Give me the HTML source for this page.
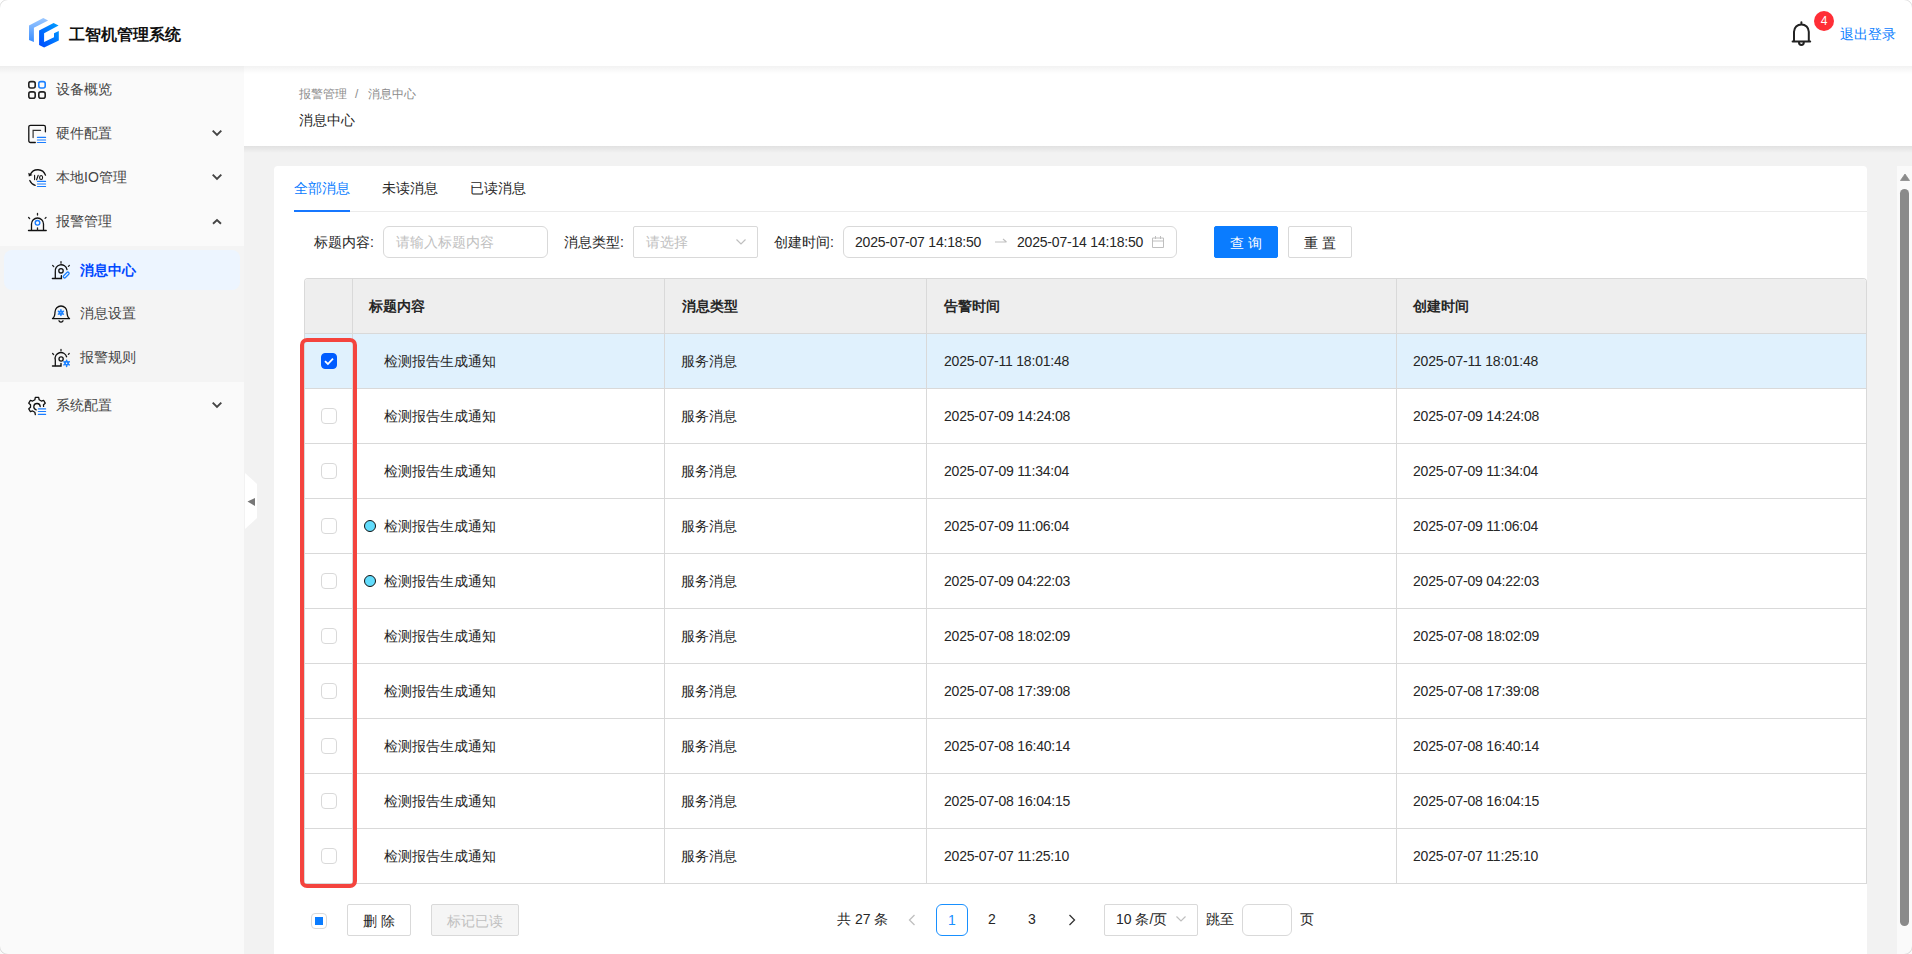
<!DOCTYPE html>
<html><head><meta charset="utf-8">
<style>
*{box-sizing:border-box;margin:0;padding:0}
html,body{width:1912px;height:954px;overflow:hidden;background:#f2f2f2;font-family:"Liberation Sans",sans-serif;font-size:14px;color:#262626}
.a{position:absolute}
.t{position:absolute;white-space:nowrap;line-height:20px}
#hdr{left:0;top:0;width:1912px;height:66px;background:#fff;z-index:5}
#side{left:0;top:66px;width:244px;height:888px;background:#fafafa}
#sub{left:0;top:246px;width:244px;height:136px;background:#f4f4f4}
#selbg{left:4px;top:250px;width:236px;height:40px;background:#edf5ff;border-radius:8px}
.mi{position:absolute;left:56px;white-space:nowrap;line-height:20px;color:#444}
.chev{position:absolute;left:211px;width:12px;height:8px}
#ph{left:244px;top:66px;width:1668px;height:80px;background:#fff}
#card{left:274px;top:166px;width:1593px;height:800px;background:#fff;border-radius:4px}
.inp{position:absolute;border:1px solid #d9d9d9;background:#fff}
.ph{color:#bfbfbf}
.btn{position:absolute;height:32px;border:1px solid #d9d9d9;background:#fff;border-radius:2px;text-align:center;line-height:32px}
#tbl{left:304px;top:278px;width:1563px;height:606px;border:1px solid #d9d9d9;border-radius:4px 4px 0 0;overflow:hidden;border-bottom:none}
.hrow{position:absolute;left:0;top:0;width:100%;height:55px;background:#eeeeee;border-bottom:1px solid #d9d9d9}
.row{position:absolute;left:0;width:100%;height:55px;border-bottom:1px solid #d9d9d9}
.vl{position:absolute;top:0;width:1px;height:606px;background:#d9d9d9}
.cb{position:absolute;left:16px;width:16px;height:16px;border:1px solid #d9d9d9;border-radius:4px;background:#fff}
.ct{position:absolute;white-space:nowrap;line-height:20px;color:#262626}
.ht{position:absolute;white-space:nowrap;line-height:20px;color:#262626;font-weight:bold}
.dt{letter-spacing:-0.2px}
.dot{position:absolute;left:59px;width:12px;height:12px;border-radius:50%;background:#62dcfc;border:1px solid #111}
</style></head><body>

<!-- header -->
<div id="hdr" class="a">
  <svg class="a" style="left:0;top:0" width="70" height="66" viewBox="0 0 70 66">
    <defs>
      <linearGradient id="g1" x1="0" y1="0" x2="0" y2="1"><stop offset="0" stop-color="#9cc8ff"/><stop offset="1" stop-color="#3a8dff"/></linearGradient>
      <linearGradient id="g2" x1="1" y1="0" x2="0" y2="1"><stop offset="0" stop-color="#00a0ff"/><stop offset="1" stop-color="#0048ff"/></linearGradient>
    </defs>
    <polygon fill="url(#g1)" points="29,25.4 43.3,18.1 48.1,20.4 33.9,27.7 33.9,42 29,39.9"/>
    <polygon fill="url(#g2)" points="39.1,30.4 53.6,23 58.6,25.4 44.1,33.2 44.1,42 54,37.2 54,33.2 58.8,31.1 58.8,40.5 44.1,47.6 39.1,45.1"/>
  </svg>
  <div class="t" style="left:69px;top:24px;font-size:16px;font-weight:bold;color:#111;line-height:22px">工智机管理系统</div>
  <svg class="a" style="left:1788px;top:18px" width="26" height="30" viewBox="0 0 26 30">
    <path d="M13.4 4.2 L13.4 5.8 M6 23.2 L6 13.8 A7.4 7.4 0 0 1 20.8 13.8 L20.8 23.2 M4.6 23.4 L22.2 23.4 M11 24.6 A2.4 2.4 0 0 0 15.8 24.6" fill="none" stroke="#222" stroke-width="2" stroke-linecap="round"/>
  </svg>
  <div class="a" style="left:1814px;top:11px;width:20px;height:20px;border-radius:50%;background:#ff2e36;color:#fff;font-size:12px;line-height:20px;text-align:center">4</div>
  <div class="t" style="left:1840px;top:24px;color:#0b80ff">退出登录</div>
</div>

<!-- sidebar -->
<div id="side" class="a"></div>
<div class="a" style="left:0;top:66px;width:1912px;height:8px;z-index:4;background:linear-gradient(rgba(0,0,0,0.05),rgba(0,0,0,0))"></div>
<div id="sub" class="a"></div>
<div id="selbg" class="a"></div>

<div class="mi" style="top:79px">设备概览</div>
<div class="mi" style="top:123px">硬件配置</div>
<div class="mi" style="top:167px">本地IO管理</div>
<div class="mi" style="top:211px">报警管理</div>
<div class="mi" style="left:80px;top:260px;color:#0048ff;font-weight:bold">消息中心</div>
<div class="mi" style="left:80px;top:303px">消息设置</div>
<div class="mi" style="left:80px;top:347px">报警规则</div>
<div class="mi" style="top:395px">系统配置</div>


<!-- sidebar icons -->
<svg class="a" style="left:24px;top:76px" width="28" height="28" viewBox="0 0 28 28" fill="none" stroke-width="1.4">
  <rect x="4.8" y="5.6" width="6.4" height="6.4" rx="2" stroke="#222" stroke-width="1.6"/>
  <rect x="14.8" y="5.6" width="6.4" height="6.4" rx="2" stroke="#1a80ff" stroke-width="1.6"/>
  <rect x="4.8" y="15.9" width="6.4" height="6.4" rx="2" stroke="#222" stroke-width="1.6"/>
  <rect x="14.8" y="15.9" width="6.4" height="6.4" rx="2" stroke="#222" stroke-width="1.6"/>
</svg>
<svg class="a" style="left:24px;top:120px" width="28" height="28" viewBox="0 0 28 28" fill="none" stroke-linecap="round">
  <path d="M21.4 11.8 V7 A1.7 1.7 0 0 0 19.7 5.3 H6.5 A1.7 1.7 0 0 0 4.8 7 V20.8 A1.7 1.7 0 0 0 6.5 22.5 H11.3" stroke="#111" stroke-width="1.3"/>
  <path d="M9.1 17.6 V10.3 H16.6" stroke="#333" stroke-width="1.2"/>
  <path d="M13.4 17.4 H21.6 M13.4 20 H21.6 M13.4 22.5 H21.6" stroke="#1a7dff" stroke-width="1.1"/>
</svg>
<svg class="a" style="left:24px;top:164px" width="28" height="28" viewBox="0 0 28 28" fill="none" stroke-linecap="round">
  <path d="M6.3 10.6 A8.2 8.2 0 0 1 21.5 11.2" stroke="#111" stroke-width="1.3"/>
  <path d="M5.8 16.5 A8.2 8.2 0 0 0 11.2 21.4" stroke="#111" stroke-width="1.3"/>
  <polygon points="4.3,8.8 8.5,11 4.8,12.6" fill="#111"/>
  <path d="M10.6 11.4 V15.6 M14.2 11.3 L12.6 15.7" stroke="#111" stroke-width="1.1"/><ellipse cx="17.1" cy="13.5" rx="1.5" ry="2.05" stroke="#111" stroke-width="1.1"/>
  <path d="M13.4 17.4 H21.6 M13.4 20 H21.6 M13.4 22.5 H21.6" stroke="#1a7dff" stroke-width="1.1"/>
</svg>
<svg class="a" style="left:24px;top:208px" width="28" height="28" viewBox="0 0 28 28" fill="none" stroke-linecap="round">
  <path d="M7.5 22 V16 A6 6 0 0 1 19.5 16 V22" stroke="#111" stroke-width="1.3"/>
  <path d="M4.5 22.5 H22.2" stroke="#111" stroke-width="1.4"/>
  <path d="M13.5 5.5 V7 M4.6 9.5 L5.6 10.5 M22 9.5 L21.1 10.4 M13.5 19.8 V22" stroke="#222" stroke-width="1.3"/>
  <circle cx="13.5" cy="14.8" r="2.3" stroke="#1a7dff" stroke-width="1.4"/>
</svg>
<svg class="a" style="left:48px;top:255px" width="28" height="28" viewBox="0 0 28 28" fill="none" stroke-linecap="round">
  <path d="M7.3 23 V16.8 A5.8 5.8 0 0 1 19 14.6" stroke="#111" stroke-width="1.3"/>
  <path d="M4.4 23.5 H13.4 V20.8" stroke="#111" stroke-width="1.4"/>
  <path d="M13 6.6 V8.2 M4.6 10.4 L5.7 11.5 M21.4 10.4 L20.4 11.4" stroke="#222" stroke-width="1.3"/>
  <circle cx="13" cy="15.8" r="2.2" stroke="#111" stroke-width="1.3"/>
  <g transform="translate(18.2 20) rotate(-45)"><rect x="-3.6" y="-1.3" width="7.2" height="2.6" rx="1.3" stroke="#1a80ff" stroke-width="1.2"/></g>
</svg>
<svg class="a" style="left:48px;top:299px" width="28" height="28" viewBox="0 0 28 28" fill="none" stroke-linecap="round">
  <path d="M4.5 19.6 Q7 18 7 13 A6 6 0 0 1 19 13 Q19 18 21.5 19.6 Z" stroke="#111" stroke-width="1.3" stroke-linejoin="round"/>
  <path d="M11 21.8 Q13 24.5 15 21.8" stroke="#111" stroke-width="1.3"/>
  <circle cx="12.9" cy="13.7" r="1.5" stroke="#1a80ff" stroke-width="1.5"/><path d="M12.90 12.40 L12.90 10.80 M14.03 13.05 L15.41 12.25 M14.03 14.35 L15.41 15.15 M12.90 15.00 L12.90 16.60 M11.77 14.35 L10.39 15.15 M11.77 13.05 L10.39 12.25" stroke="#1a80ff" stroke-width="1.5"/>
</svg>
<svg class="a" style="left:48px;top:343px" width="28" height="28" viewBox="0 0 28 28" fill="none" stroke-linecap="round">
  <path d="M7.3 22.5 V17 A5.7 5.7 0 0 1 18.6 13.8" stroke="#111" stroke-width="1.3"/>
  <path d="M4.5 23 H13 V20.5" stroke="#111" stroke-width="1.4"/>
  <path d="M13 6.3 V7.8 M4.6 10.5 L5.6 11.5 M21.2 10.5 L20.4 11.4" stroke="#222" stroke-width="1.3"/>
  <circle cx="13.1" cy="16" r="2.1" stroke="#111" stroke-width="1.3"/>
  <circle cx="18.6" cy="20.3" r="1.7" stroke="#1a80ff" stroke-width="1.5"/><path d="M18.60 18.80 L18.60 17.20 M19.90 19.55 L21.28 18.75 M19.90 21.05 L21.28 21.85 M18.60 21.80 L18.60 23.40 M17.30 21.05 L15.92 21.85 M17.30 19.55 L15.92 18.75" stroke="#1a80ff" stroke-width="1.5"/>
</svg>
<svg class="a" style="left:24px;top:392px" width="28" height="28" viewBox="0 0 28 28" fill="none" stroke-linecap="round" stroke-linejoin="round">
  <path d="M19.58 14.46 L19.48 12.74 L21.23 11.17 L19.57 8.29 L17.33 9.02 L15.15 7.76 L14.66 5.46 L11.34 5.46 L10.85 7.76 L8.67 9.02 L6.43 8.29 L4.77 11.17 L6.52 12.74 L6.52 15.26 L4.77 16.83 L6.43 19.71 L8.67 18.98 L10.85 20.24 L11.34 22.54" stroke="#111" stroke-width="1.3"/>
  <path d="M16.2 14.6 A3.2 3.2 0 1 0 12.2 17.8" stroke="#111" stroke-width="1.3"/>
  <path d="M14.4 16.9 H21.6 M14.4 19.5 H21.6 M14.4 22.4 H21.6" stroke="#1a7dff" stroke-width="1.2"/>
</svg>
<!-- chevrons -->
<svg class="chev" style="top:129px" viewBox="0 0 12 8"><path d="M1.7 1.6 L6 6 L10.3 1.6" fill="none" stroke="#444" stroke-width="1.9"/></svg>
<svg class="chev" style="top:173px" viewBox="0 0 12 8"><path d="M1.7 1.6 L6 6 L10.3 1.6" fill="none" stroke="#444" stroke-width="1.9"/></svg>
<svg class="chev" style="top:218px" viewBox="0 0 12 8"><path d="M2 5.8 L6 2 L10 5.8" fill="none" stroke="#444" stroke-width="1.9"/></svg>
<svg class="chev" style="top:401px" viewBox="0 0 12 8"><path d="M1.7 1.6 L6 6 L10.3 1.6" fill="none" stroke="#444" stroke-width="1.9"/></svg>

<!-- page header -->
<div id="ph" class="a"></div>
<div class="a" style="left:244px;top:146px;width:1668px;height:7px;background:linear-gradient(rgba(0,0,0,0.07),rgba(0,0,0,0))"></div>
<div class="t" style="left:299px;top:84px;font-size:12px;color:#8c8c8c">报警管理<span style="margin:0 10px 0 8px">/</span>消息中心</div>
<div class="t" style="left:299px;top:110px;color:#1f1f1f">消息中心</div>

<!-- collapse handle -->
<svg class="a" style="left:244px;top:470px" width="14" height="62" viewBox="0 0 14 62">
  <polygon points="1,3 13,14 13,48 1,59" fill="#fff"/>
  <polygon points="3.5,31.5 11,28 11,36" fill="#777"/>
</svg>

<!-- card -->
<div id="card" class="a"></div>


<!-- tabs -->
<div class="t" style="left:294px;top:178px;color:#0a7cff">全部消息</div>
<div class="t" style="left:382px;top:178px;color:#262626">未读消息</div>
<div class="t" style="left:470px;top:178px;color:#262626">已读消息</div>
<div class="a" style="left:294px;top:211px;width:1573px;height:1px;background:#ebebeb"></div>
<div class="a" style="left:294px;top:210px;width:56px;height:2px;background:#1677ff"></div>

<!-- filters -->
<div class="t" style="left:314px;top:232px">标题内容:</div>
<div class="inp" style="left:383px;top:226px;width:165px;height:32px;border-radius:6px"></div>
<div class="t ph" style="left:396px;top:232px">请输入标题内容</div>
<div class="t" style="left:564px;top:232px">消息类型:</div>
<div class="inp" style="left:633px;top:226px;width:125px;height:32px;border-radius:2px"></div>
<div class="t ph" style="left:646px;top:232px">请选择</div>
<svg class="a" style="left:735px;top:237px" width="12" height="10" viewBox="0 0 12 10"><path d="M1.5 2.5 L6 7 L10.5 2.5" fill="none" stroke="#bfbfbf" stroke-width="1.2"/></svg>
<div class="t" style="left:774px;top:232px">创建时间:</div>
<div class="inp" style="left:843px;top:226px;width:334px;height:32px;border-radius:6px"></div>
<div class="t dt" style="left:855px;top:232px">2025-07-07 14:18:50</div>
<svg class="a" style="left:994px;top:236px" width="14" height="10" viewBox="0 0 14 10"><path d="M1 6 H12.5 M9 3 L12.5 6" fill="none" stroke="#bfbfbf" stroke-width="1.1"/></svg>
<div class="t dt" style="left:1017px;top:232px">2025-07-14 14:18:50</div>
<svg class="a" style="left:1151px;top:235px" width="14" height="14" viewBox="0 0 14 14"><path d="M1.5 3 H12.5 V12.5 H1.5 Z M1.5 6 H12.5 M4.5 1 V4 M9.5 1 V4" fill="none" stroke="#bfbfbf" stroke-width="1"/></svg>
<div class="btn" style="left:1214px;top:226px;width:64px;background:#0a7cff;border-color:#0a7cff;color:#fff;letter-spacing:4px;text-indent:4px">查询</div>
<div class="btn" style="left:1288px;top:226px;width:64px;letter-spacing:4px;text-indent:4px">重置</div>

<!-- table -->
<div id="tbl" class="a">
  <div class="hrow">
    <div class="ht" style="left:64px;top:17px">标题内容</div>
    <div class="ht" style="left:377px;top:17px">消息类型</div>
    <div class="ht" style="left:639px;top:17px">告警时间</div>
    <div class="ht" style="left:1108px;top:17px">创建时间</div>
  </div>
<div class="row" style="top:55px;background:#e0f1fd;"><div class="cb" style="top:19px;background:#005cff;border-color:#005cff"><svg width="14" height="14" viewBox="0 0 14 14" style="position:absolute;left:0;top:0"><path d="M3 7.2 L5.9 10 L11 4.6" fill="none" stroke="#fff" stroke-width="1.8"/></svg></div>
<div class="ct" style="left:79px;top:17px">检测报告生成通知</div>
<div class="ct" style="left:376px;top:17px">服务消息</div>
<div class="ct dt" style="left:639px;top:17px">2025-07-11 18:01:48</div>
<div class="ct dt" style="left:1108px;top:17px">2025-07-11 18:01:48</div>
</div>
<div class="row" style="top:110px;"><div class="cb" style="top:19px"></div>
<div class="ct" style="left:79px;top:17px">检测报告生成通知</div>
<div class="ct" style="left:376px;top:17px">服务消息</div>
<div class="ct dt" style="left:639px;top:17px">2025-07-09 14:24:08</div>
<div class="ct dt" style="left:1108px;top:17px">2025-07-09 14:24:08</div>
</div>
<div class="row" style="top:165px;"><div class="cb" style="top:19px"></div>
<div class="ct" style="left:79px;top:17px">检测报告生成通知</div>
<div class="ct" style="left:376px;top:17px">服务消息</div>
<div class="ct dt" style="left:639px;top:17px">2025-07-09 11:34:04</div>
<div class="ct dt" style="left:1108px;top:17px">2025-07-09 11:34:04</div>
</div>
<div class="row" style="top:220px;"><div class="cb" style="top:19px"></div><div class="dot" style="top:21px"></div>
<div class="ct" style="left:79px;top:17px">检测报告生成通知</div>
<div class="ct" style="left:376px;top:17px">服务消息</div>
<div class="ct dt" style="left:639px;top:17px">2025-07-09 11:06:04</div>
<div class="ct dt" style="left:1108px;top:17px">2025-07-09 11:06:04</div>
</div>
<div class="row" style="top:275px;"><div class="cb" style="top:19px"></div><div class="dot" style="top:21px"></div>
<div class="ct" style="left:79px;top:17px">检测报告生成通知</div>
<div class="ct" style="left:376px;top:17px">服务消息</div>
<div class="ct dt" style="left:639px;top:17px">2025-07-09 04:22:03</div>
<div class="ct dt" style="left:1108px;top:17px">2025-07-09 04:22:03</div>
</div>
<div class="row" style="top:330px;"><div class="cb" style="top:19px"></div>
<div class="ct" style="left:79px;top:17px">检测报告生成通知</div>
<div class="ct" style="left:376px;top:17px">服务消息</div>
<div class="ct dt" style="left:639px;top:17px">2025-07-08 18:02:09</div>
<div class="ct dt" style="left:1108px;top:17px">2025-07-08 18:02:09</div>
</div>
<div class="row" style="top:385px;"><div class="cb" style="top:19px"></div>
<div class="ct" style="left:79px;top:17px">检测报告生成通知</div>
<div class="ct" style="left:376px;top:17px">服务消息</div>
<div class="ct dt" style="left:639px;top:17px">2025-07-08 17:39:08</div>
<div class="ct dt" style="left:1108px;top:17px">2025-07-08 17:39:08</div>
</div>
<div class="row" style="top:440px;"><div class="cb" style="top:19px"></div>
<div class="ct" style="left:79px;top:17px">检测报告生成通知</div>
<div class="ct" style="left:376px;top:17px">服务消息</div>
<div class="ct dt" style="left:639px;top:17px">2025-07-08 16:40:14</div>
<div class="ct dt" style="left:1108px;top:17px">2025-07-08 16:40:14</div>
</div>
<div class="row" style="top:495px;"><div class="cb" style="top:19px"></div>
<div class="ct" style="left:79px;top:17px">检测报告生成通知</div>
<div class="ct" style="left:376px;top:17px">服务消息</div>
<div class="ct dt" style="left:639px;top:17px">2025-07-08 16:04:15</div>
<div class="ct dt" style="left:1108px;top:17px">2025-07-08 16:04:15</div>
</div>
<div class="row" style="top:550px;"><div class="cb" style="top:19px"></div>
<div class="ct" style="left:79px;top:17px">检测报告生成通知</div>
<div class="ct" style="left:376px;top:17px">服务消息</div>
<div class="ct dt" style="left:639px;top:17px">2025-07-07 11:25:10</div>
<div class="ct dt" style="left:1108px;top:17px">2025-07-07 11:25:10</div>
</div>
  <div class="vl" style="left:47px"></div>
  <div class="vl" style="left:359px"></div>
  <div class="vl" style="left:621px"></div>
  <div class="vl" style="left:1091px"></div>
</div>
<!-- red highlight -->
<div class="a" style="left:300px;top:338px;width:57px;height:550px;border:4px solid #f4443e;border-radius:7px"></div>

<!-- bottom bar -->
<div class="a" style="left:311px;top:913px;width:16px;height:16px;border:1px solid #d9d9d9;border-radius:4px;background:#fff"><div class="a" style="left:3px;top:3px;width:8px;height:8px;background:#0a7cff"></div></div>
<div class="btn" style="left:347px;top:904px;width:64px;letter-spacing:4px;text-indent:4px">删除</div>
<div class="btn" style="left:431px;top:904px;width:88px;background:#f5f5f5;color:#bfbfbf">标记已读</div>
<div class="t" style="left:837px;top:909px">共 27 条</div>
<svg class="a" style="left:906px;top:913px" width="12" height="14" viewBox="0 0 12 14"><path d="M8.5 2 L3.5 7 L8.5 12" fill="none" stroke="#bfbfbf" stroke-width="1.3"/></svg>
<div class="a" style="left:936px;top:904px;width:32px;height:32px;border:1px solid #1890ff;border-radius:6px;color:#1890ff;text-align:center;line-height:30px">1</div>
<div class="t" style="left:984px;top:909px;width:16px;text-align:center">2</div>
<div class="t" style="left:1024px;top:909px;width:16px;text-align:center">3</div>
<svg class="a" style="left:1066px;top:913px" width="12" height="14" viewBox="0 0 12 14"><path d="M3.5 2 L8.5 7 L3.5 12" fill="none" stroke="#333" stroke-width="1.3"/></svg>
<div class="inp" style="left:1104px;top:904px;width:94px;height:32px;border-radius:2px"></div>
<div class="t" style="left:1116px;top:909px">10 条/页</div>
<svg class="a" style="left:1175px;top:914px" width="12" height="10" viewBox="0 0 12 10"><path d="M1.5 2.5 L6 7 L10.5 2.5" fill="none" stroke="#bfbfbf" stroke-width="1.2"/></svg>
<div class="t" style="left:1206px;top:909px">跳至</div>
<div class="inp" style="left:1242px;top:904px;width:50px;height:32px;border-radius:6px"></div>
<div class="t" style="left:1300px;top:909px">页</div>

<!-- scrollbar -->
<div class="a" style="left:1897px;top:166px;width:15px;height:788px;background:#fafafa"></div>
<svg class="a" style="left:1899px;top:172px" width="12" height="10" viewBox="0 0 12 10"><polygon points="6,2 10.5,8.5 1.5,8.5" fill="#8a8a8a" stroke="#8a8a8a" stroke-width="0.8" stroke-linejoin="round"/></svg>
<div class="a" style="left:1900px;top:189px;width:9px;height:737px;background:#8a8a8a;border-radius:5px"></div>

<div class="a" style="left:-1px;top:-1px;width:1914px;height:956px;border:1.5px solid rgba(0,0,0,0.13);border-radius:9px;z-index:50;pointer-events:none"></div>
</body></html>
